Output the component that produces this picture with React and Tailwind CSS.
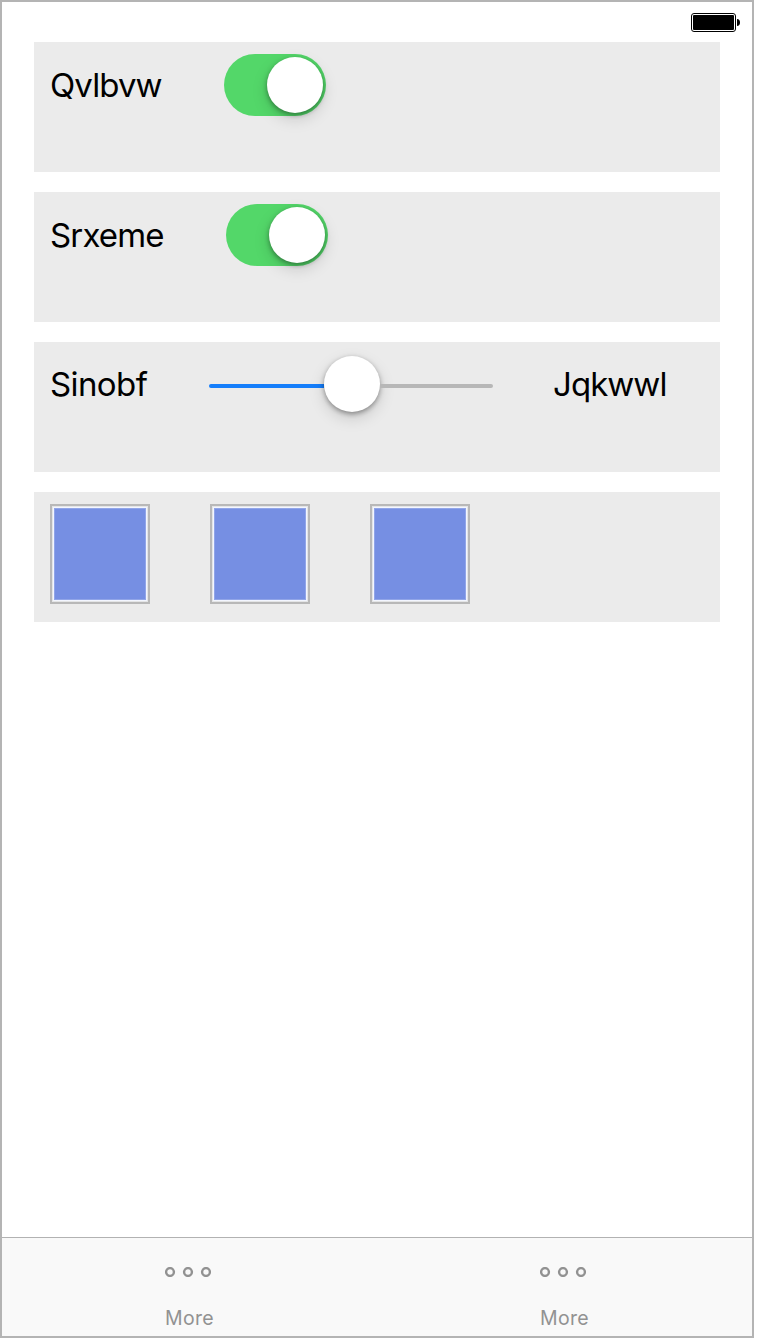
function Panel({ children }) {
  return <section className="flex h-[130px] w-[686px] items-start bg-[#ebebeb] pl-4 pt-3">{children}</section>;
}

function Label({ className, children }) {
  return (
    <span className={`shrink-0 whitespace-nowrap text-[33px] font-normal leading-10 text-black ${className}`}>
      {children}
    </span>
  );
}

function Switch() {
  return (
    <button
      type="button"
      role="switch"
      aria-checked="true"
      className="flex h-[62px] w-[102px] shrink-0 items-center justify-end rounded-full bg-[#53d769] pr-[3px]"
    >
      <span className="size-14 rounded-full bg-white shadow-[0_6px_16px_rgba(0,0,0,0.15),0_2px_5px_rgba(0,0,0,0.36)]" />
    </button>
  );
}

function Slider() {
  return (
    <div className="flex h-[60px] w-[284px] shrink-0 items-center">
      <span className="mt-1 h-1 w-[115px] rounded-l-full bg-[#157efb]" />
      <span className="size-14 rounded-full bg-white shadow-[0_6px_16px_rgba(0,0,0,0.15),0_2px_5px_rgba(0,0,0,0.36)]" />
      <span className="mt-1 h-1 w-[113px] rounded-r-full bg-[#b7b7b7]" />
    </div>
  );
}

function Swatch() {
  return (
    <div className="size-[100px] border-2 border-[#b8b8b8] bg-[#e4e5e6] p-px">
      <div className="size-full border border-[#f3f6ff] bg-[#768fe3]">
        <div className="size-full border border-[#91a5e8]" />
      </div>
    </div>
  );
}

function Tab() {
  return (
    <button type="button" className="flex flex-1 flex-col items-center pt-[29px]">
      <svg className="mr-[3px]" width="46" height="10" viewBox="0 0 46 10" fill="none" stroke="#929292" strokeWidth="2.4">
        <circle cx="5" cy="5" r="3.9" />
        <circle cx="23" cy="5" r="3.9" />
        <circle cx="41" cy="5" r="3.9" />
      </svg>
      <span className="mt-[29px] text-[19.5px] leading-6 tracking-[0.3px] text-[#929292]">More</span>
    </button>
  );
}

export default function App() {
  return (
    <div className="h-[1340px] w-[760px] bg-white font-['Inter','Liberation_Sans',sans-serif]">
      <main className="flex h-[1338px] w-[754px] flex-col border-2 border-[#b4b4b4] bg-white">
        <header className="flex h-10 shrink-0 justify-end pr-3 pt-[11px]">
          <svg width="49" height="19" viewBox="0 0 49 19">
            <rect x="0.5" y="0.5" width="44" height="18" rx="2.5" fill="white" stroke="black" />
            <rect x="2" y="2" width="41" height="15" rx="1" fill="black" />
            <path d="M46 6c2 0 3 1.4 3 3.5S48 13 46 13Z" fill="black" />
          </svg>
        </header>
        <div className="flex flex-1 flex-col gap-5 pl-8">
          <Panel>
            <Label className="mt-[11px] w-[174px] tracking-[-0.9px]">Qvlbvw</Label>
            <Switch />
          </Panel>
          <Panel>
            <Label className="mt-[11px] w-[176px] tracking-[-0.85px]">Srxeme</Label>
            <Switch />
          </Panel>
          <Panel>
            <Label className="mt-2.5 w-[159px] tracking-[-0.6px]">Sinobf</Label>
            <Slider />
            <Label className="ml-[60px] mt-2.5 tracking-[-0.95px]">Jqkwwl</Label>
          </Panel>
          <Panel>
            <div className="flex gap-[60px]">
              <Swatch />
              <Swatch />
              <Swatch />
            </div>
          </Panel>
        </div>
        <nav className="flex h-[99px] shrink-0 border-t border-[#b2b2b2] bg-[#f9f9f9]">
          <Tab />
          <Tab />
        </nav>
      </main>
    </div>
  );
}
